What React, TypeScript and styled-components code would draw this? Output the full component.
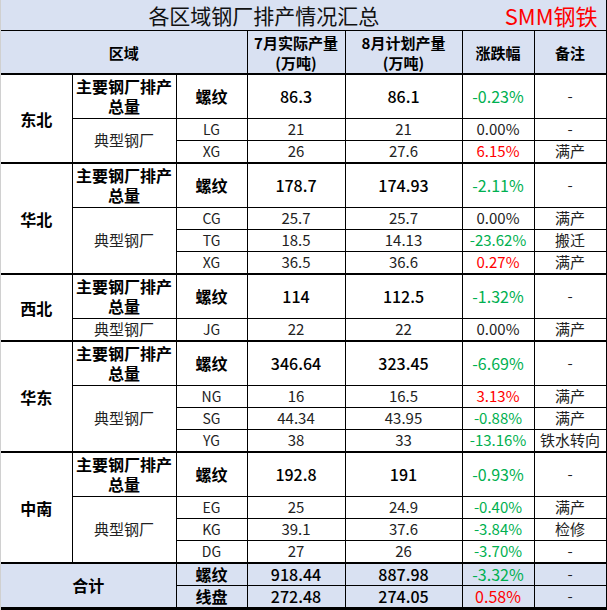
import React from "react";
import styled, { createGlobalStyle } from "styled-components";

const GlobalStyle = createGlobalStyle`
  html, body {
    margin: 0;
    padding: 0;
    background: #ffffff;
  }
  body {
    font-family: "Noto Sans CJK SC", "Noto Sans", sans-serif;
  }
`;

const HEAD_BG = "#d9e1f2";
const GREEN = "#00b050";
const RED = "#ff0000";

const Sheet = styled.div`
  width: 606px;
  border-left: 1px solid #d0d0d0;
`;

const Table = styled.table`
  width: 606px;
  border-collapse: collapse;
  table-layout: fixed;
`;

const Row = styled.tr<{ $h: number; $shade?: boolean }>`
  height: ${(p) => p.$h}px;
  background: ${(p) => (p.$shade ? HEAD_BG : "#ffffff")};
`;

const Cell = styled.td<{
  $top?: number;
  $bottom?: number;
  $bold?: boolean;
  $num?: boolean;
  $size?: number;
  $first?: boolean;
  $last?: boolean;
}>`
  padding: 0;
  border: 1px solid #000;
  border-top-width: ${(p) => p.$top ?? 1}px;
  border-bottom-width: ${(p) => p.$bottom ?? 1}px;
  border-left: ${(p) => (p.$first ? "none" : "1px solid #000")};
  border-right-width: ${(p) => (p.$last ? 3 : 1)}px;
  text-align: center;
  vertical-align: middle;
  font-size: ${(p) => p.$size ?? 15}px;
  font-weight: ${(p) => (p.$bold ? 700 : p.$num ? 500 : 400)};
  color: ${(p) => (p.$bold || p.$num ? "#000" : "#222")};
  line-height: 20px;
  white-space: nowrap;
  overflow: visible;
`;

const TitleCell = styled.td`
  padding: 0;
  border: none;
  border-bottom: 1px solid #000;
  border-right: 3px solid #000;
  background: ${HEAD_BG};
`;

const TitleBar = styled.div`
  display: flex;
  align-items: center;
  height: 29px;
`;

const Title = styled.div`
  flex: 1;
  padding-left: 22px;
  text-align: center;
  font-size: 21px;
  line-height: 28px;
  color: #111;
`;

const Brand = styled.div`
  padding-right: 8px;
  font-size: 22px;
  line-height: 28px;
  color: ${RED};
`;

const HeadCell = styled(Cell)`
  padding-top: 2px;
`;

const Change = styled.span<{ $v: string }>`
  color: ${(p) =>
    p.$v.startsWith("-") ? GREEN : p.$v === "0.00%" ? "#222" : RED};
  font-weight: 400;
`;

type Mill = { code: string; jul: string; aug: string; chg: string; note: string };
type Region = {
  name: string;
  main: { jul: string; aug: string; chg: string };
  mills: Mill[];
};

const regions: Region[] = [
  {
    name: "东北",
    main: { jul: "86.3", aug: "86.1", chg: "-0.23%" },
    mills: [
      { code: "LG", jul: "21", aug: "21", chg: "0.00%", note: "-" },
      { code: "XG", jul: "26", aug: "27.6", chg: "6.15%", note: "满产" },
    ],
  },
  {
    name: "华北",
    main: { jul: "178.7", aug: "174.93", chg: "-2.11%" },
    mills: [
      { code: "CG", jul: "25.7", aug: "25.7", chg: "0.00%", note: "满产" },
      { code: "TG", jul: "18.5", aug: "14.13", chg: "-23.62%", note: "搬迁" },
      { code: "XG", jul: "36.5", aug: "36.6", chg: "0.27%", note: "满产" },
    ],
  },
  {
    name: "西北",
    main: { jul: "114", aug: "112.5", chg: "-1.32%" },
    mills: [{ code: "JG", jul: "22", aug: "22", chg: "0.00%", note: "满产" }],
  },
  {
    name: "华东",
    main: { jul: "346.64", aug: "323.45", chg: "-6.69%" },
    mills: [
      { code: "NG", jul: "16", aug: "16.5", chg: "3.13%", note: "满产" },
      { code: "SG", jul: "44.34", aug: "43.95", chg: "-0.88%", note: "满产" },
      { code: "YG", jul: "38", aug: "33", chg: "-13.16%", note: "铁水转向" },
    ],
  },
  {
    name: "中南",
    main: { jul: "192.8", aug: "191", chg: "-0.93%" },
    mills: [
      { code: "EG", jul: "25", aug: "24.9", chg: "-0.40%", note: "满产" },
      { code: "KG", jul: "39.1", aug: "37.6", chg: "-3.84%", note: "检修" },
      { code: "DG", jul: "27", aug: "26", chg: "-3.70%", note: "-" },
    ],
  },
];

const totals = [
  { name: "螺纹", jul: "918.44", aug: "887.98", chg: "-3.32%" },
  { name: "线盘", jul: "272.48", aug: "274.05", chg: "0.58%" },
];

const RegionBlock = ({ r }: { r: Region }) => {
  const span = r.mills.length + 1;
  return (
    <>
      <Row $h={44}>
        <Cell $first $top={2} $bold $size={16} rowSpan={span}>
          {r.name}
        </Cell>
        <Cell $top={2} $bold $size={16}>
          主要钢厂排产
          <br />
          总量
        </Cell>
        <Cell $top={2} $bold $size={16}>
          螺纹
        </Cell>
        <Cell $top={2} $num $size={16}>
          {r.main.jul}
        </Cell>
        <Cell $top={2} $num $size={16}>
          {r.main.aug}
        </Cell>
        <Cell $top={2} $size={16}>
          <Change $v={r.main.chg}>{r.main.chg}</Change>
        </Cell>
        <Cell $top={2} $last>
          -
        </Cell>
      </Row>
      {r.mills.map((m, i) => (
        <Row $h={i === r.mills.length - 1 ? 23 : 22} key={m.code + i}>
          {i === 0 && <Cell rowSpan={r.mills.length}>典型钢厂</Cell>}
          <Cell $size={14}>{m.code}</Cell>
          <Cell>{m.jul}</Cell>
          <Cell>{m.aug}</Cell>
          <Cell>
            <Change $v={m.chg}>{m.chg}</Change>
          </Cell>
          <Cell $last>{m.note}</Cell>
        </Row>
      ))}
    </>
  );
};

export default function App() {
  return (
    <>
      <GlobalStyle />
      <Sheet>
        <Table>
          <colgroup>
            <col style={{ width: 71 }} />
            <col style={{ width: 104 }} />
            <col style={{ width: 71 }} />
            <col style={{ width: 98 }} />
            <col style={{ width: 117 }} />
            <col style={{ width: 72 }} />
            <col style={{ width: 73 }} />
          </colgroup>
          <tbody>
            <Row $h={30} $shade>
              <TitleCell colSpan={7}>
                <TitleBar>
                  <Title>各区域钢厂排产情况汇总</Title>
                  <Brand>SMM钢铁</Brand>
                </TitleBar>
              </TitleCell>
            </Row>
            <Row $h={44} $shade>
              <HeadCell $first $bold colSpan={3}>
                区域
              </HeadCell>
              <HeadCell $bold>
                7月实际产量
                <br />
                (万吨)
              </HeadCell>
              <HeadCell $bold>
                8月计划产量
                <br />
                (万吨)
              </HeadCell>
              <HeadCell $bold>涨跌幅</HeadCell>
              <HeadCell $bold $last>
                备注
              </HeadCell>
            </Row>
            {regions.map((r) => (
              <RegionBlock r={r} key={r.name} />
            ))}
            {totals.map((t, i) => {
              const top = i === 0 ? 2 : 1;
              const bottom = i === 1 ? 3 : 1;
              return (
                <Row $h={i === 0 ? 22 : 23} $shade key={t.name}>
                  {i === 0 && (
                    <Cell
                      $first
                      $top={2}
                      $bottom={3}
                      $bold
                      $size={16}
                      colSpan={2}
                      rowSpan={2}
                    >
                      合计
                    </Cell>
                  )}
                  <Cell $top={top} $bottom={bottom} $bold $size={16}>
                    {t.name}
                  </Cell>
                  <Cell $top={top} $bottom={bottom} $num $size={16}>
                    {t.jul}
                  </Cell>
                  <Cell $top={top} $bottom={bottom} $num $size={16}>
                    {t.aug}
                  </Cell>
                  <Cell $top={top} $bottom={bottom} $size={16}>
                    <Change $v={t.chg}>{t.chg}</Change>
                  </Cell>
                  <Cell $top={top} $bottom={bottom} $last>
                    -
                  </Cell>
                </Row>
              );
            })}
          </tbody>
        </Table>
      </Sheet>
    </>
  );
}
